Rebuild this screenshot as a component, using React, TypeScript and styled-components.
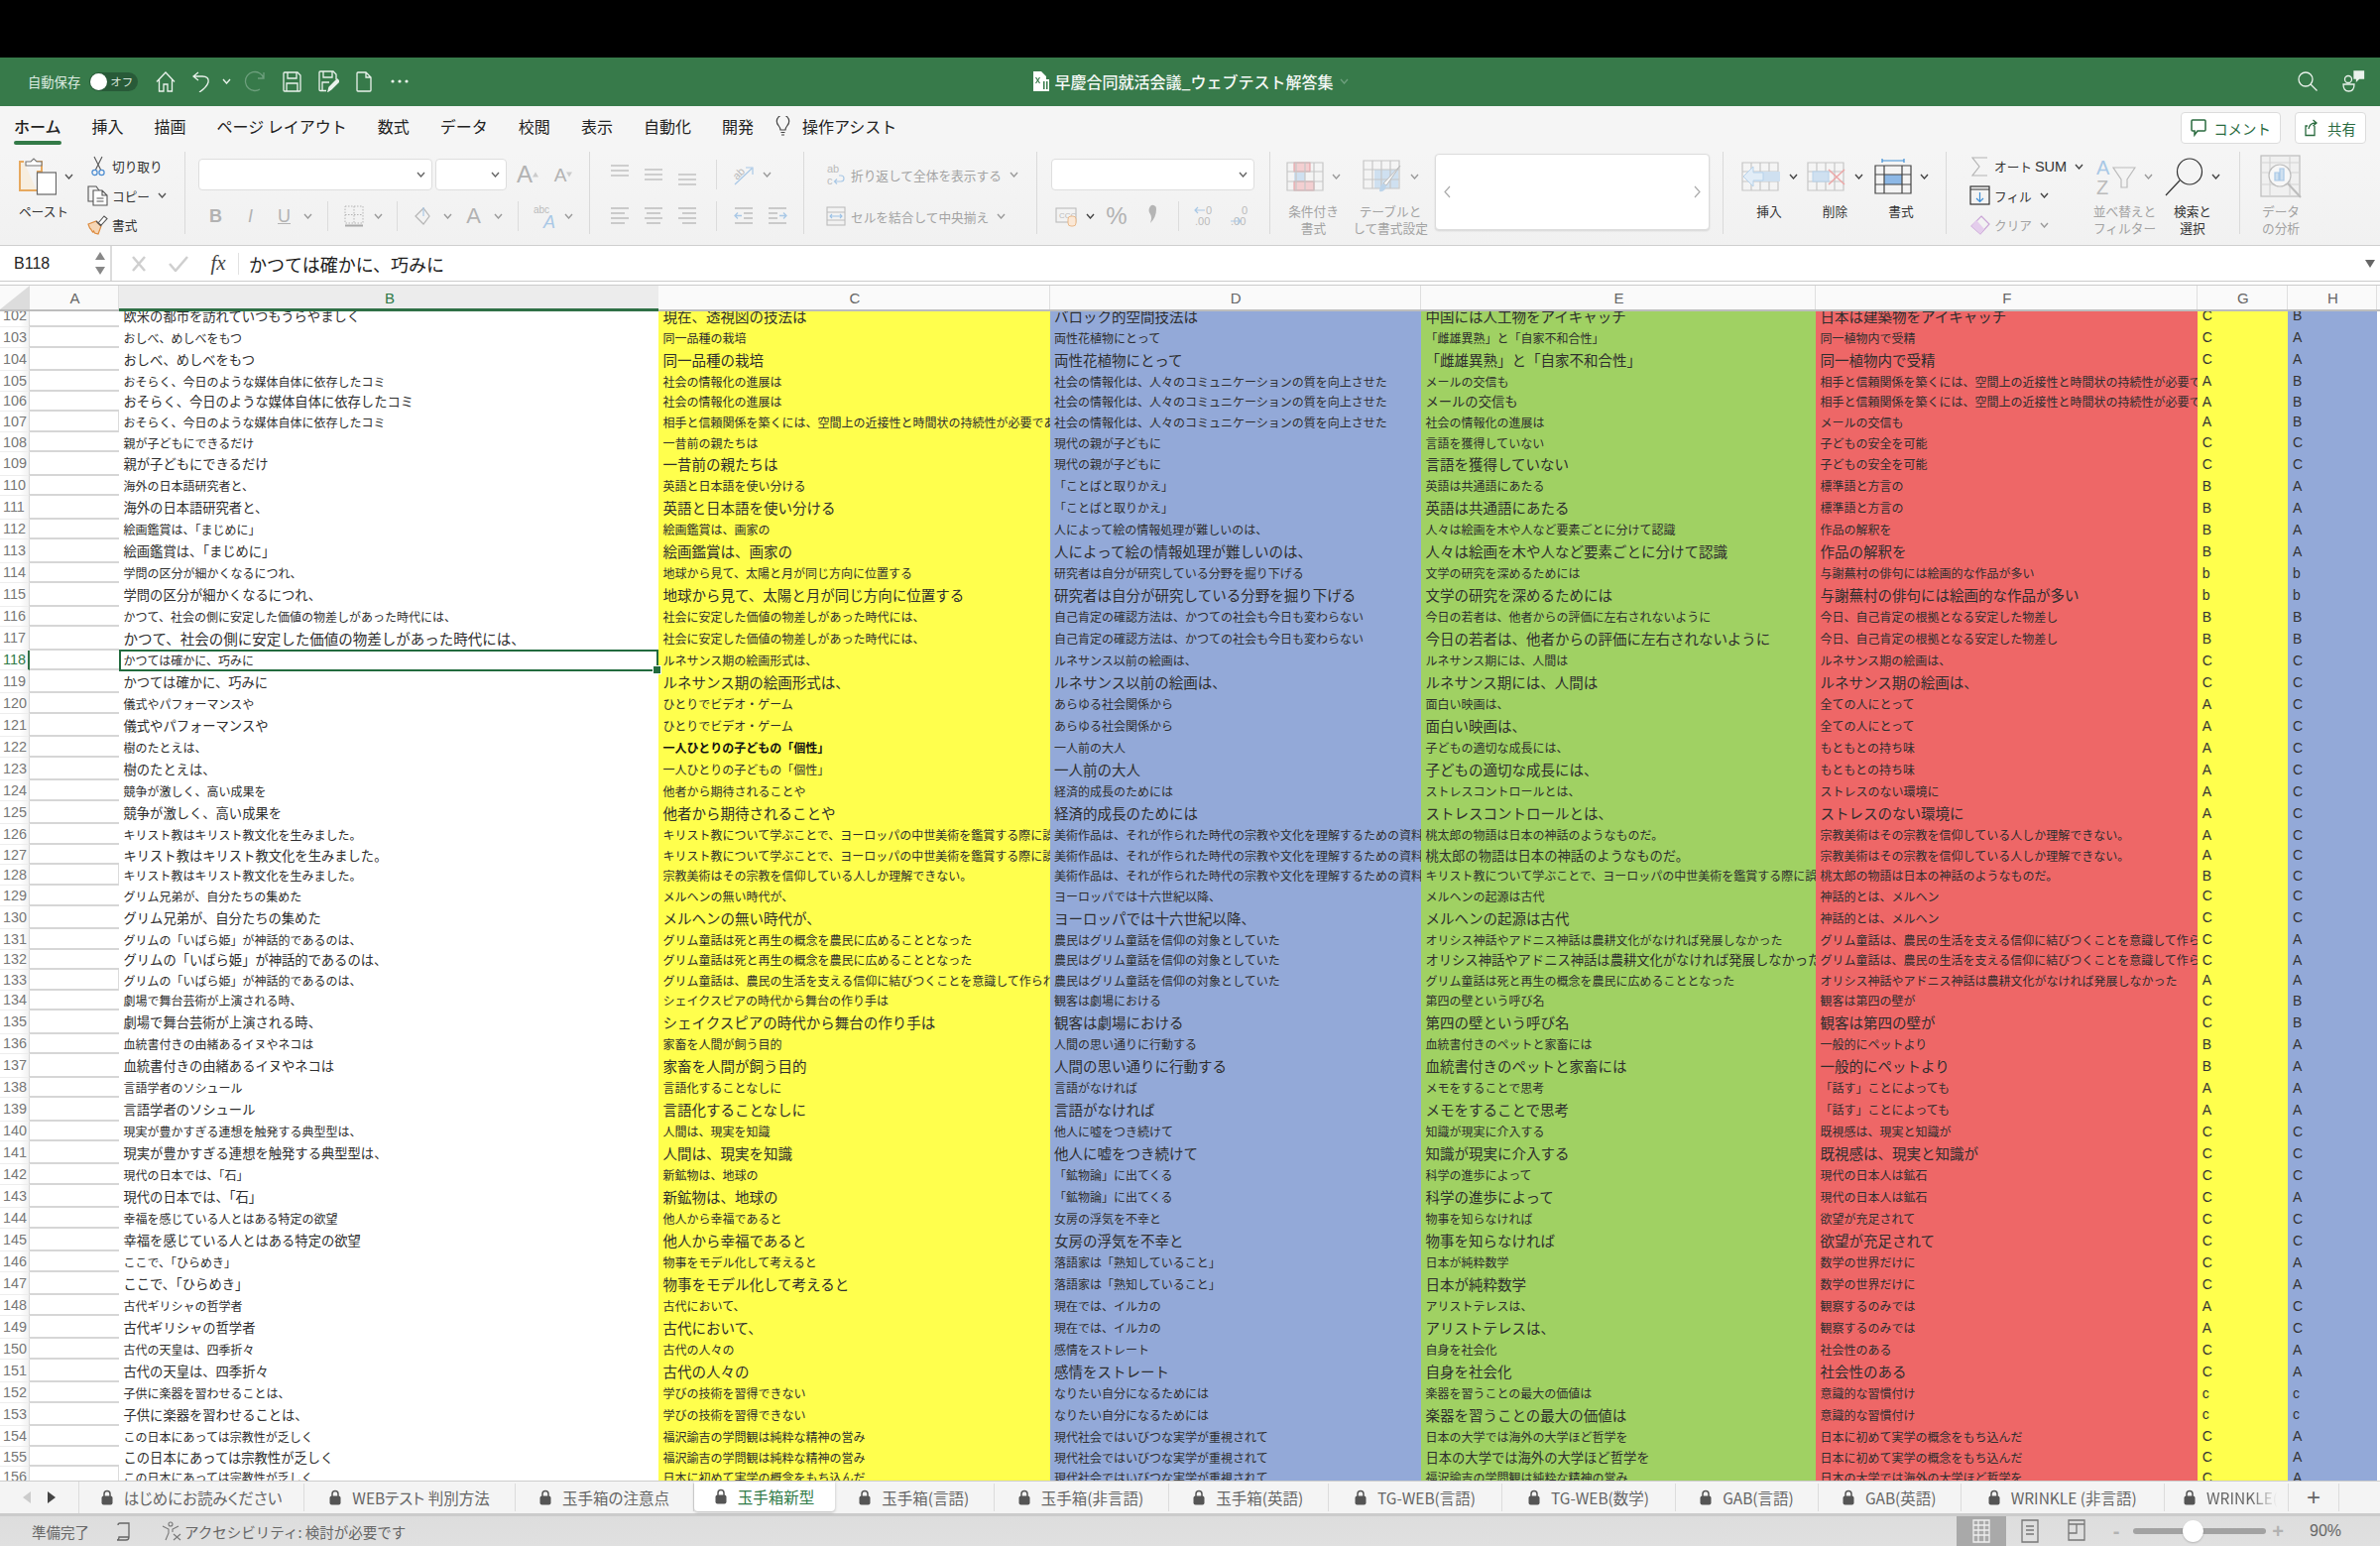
import React from 'react';
import styled, { createGlobalStyle } from 'styled-components';

const JP = `"Noto Sans CJK JP", "Noto Sans", sans-serif`;
const LATIN = `"Liberation Sans", "Noto Sans", sans-serif`;
const COLS = '30px 90px 544px 394.6px 374.4px 398px 384.7px 91.3px 90px 3px';

const GlobalStyle = createGlobalStyle`
  html, body { margin: 0; padding: 0; background: #fff; }
  * { box-sizing: border-box; }
  body { font-family: ${JP}; }
`;

const Page = styled.div`
  width: 2400px;
  height: 1559px;
  display: flex;
  flex-direction: column;
  overflow: hidden;
  background: #fff;
`;

const TopBlack = styled.div`
  height: 57.500px;
  background: #000;
`;

/* title bar */
const TitleBar = styled.div`
  height: 49.500px;
  background: #377a4a;
  display: grid;
  grid-template-columns: 1fr auto 1fr;
  align-items: center;
  color: #fff;
`;

const QuickBar = styled.div`
  display: flex;
  align-items: center;
  gap: 17px;
  padding-left: 28px;
`;

const AutoSave = styled.span`
  font-size: 13.3px;
  color: #dcebe0;
  margin-right: -8px;
`;

const Toggle = styled.div`
  position: relative;
  width: 49px;
  height: 19px;
  border-radius: 10px;
  background: #285a38;
  color: #d5e4d9;
  font-size: 11.5px;
  line-height: 19px;
  padding-left: 21px;
  margin-right: 1px;

  &::before {
    content: '';
    position: absolute;
    left: 1px;
    top: 1px;
    width: 17px;
    height: 17px;
    border-radius: 50%;
    background: #fff;
  }
`;

const UndoGroup = styled.div`
  display: flex;
  align-items: center;
  gap: 12px;
  margin-right: -4px;
`;

const TitleCenter = styled.div`
  display: flex;
  align-items: center;
  gap: 6px;
  font-size: 16px;
  font-weight: 500;
  color: #f4f8f5;
`;

const TitleRight = styled.div`
  display: flex;
  justify-content: flex-end;
  align-items: center;
  gap: 25px;
  padding-right: 15px;
`;

/* ribbon tabs */
const TabsRow = styled.div`
  height: 46px;
  background: #f5f5f5;
  display: flex;
  align-items: flex-start;
  gap: 31px;
  padding-left: 14px;
`;

const RibbonTab = styled.div<{ $active?: boolean }>`
  position: relative;
  height: 39px;
  padding-top: 7px;
  font-size: 16px;
  line-height: 26px;
  color: #222;
  white-space: nowrap;
  font-weight: ${(p) => (p.$active ? 500 : 400)};

  &::after {
    content: '';
    display: ${(p) => (p.$active ? 'block' : 'none')};
    position: absolute;
    left: 0;
    right: 0;
    bottom: 0;
    height: 4px;
    border-radius: 2px;
    background: #337a47;
  }
`;

const AssistTab = styled(RibbonTab)`
  display: flex;
  align-items: center;
  gap: 12px;
  margin-left: -9px;
  height: 39px;
  padding-top: 0;
`;

const TabActions = styled.div`
  margin-left: auto;
  display: flex;
  gap: 14px;
  padding: 6px 14px 0 0;
`;

const ActionButton = styled.div<{ $w: number }>`
  width: ${(p) => p.$w}px;
  height: 32px;
  background: #fff;
  border: 1px solid #dcdcdc;
  border-radius: 4px;
  display: flex;
  align-items: center;
  justify-content: center;
  gap: 7px;
  font-size: 14.400px;
  color: #2a6b3f;
  white-space: nowrap;
`;

/* ribbon body */
const Ribbon = styled.div`
  height: 95px;
  background: linear-gradient(#f5f5f5, #f1f1f1);
  border-bottom: 1px solid #cfcfcf;
  display: flex;
  align-items: flex-start;
`;

const Group = styled.div<{ $w: number; $pl?: number; $gap?: number; $last?: boolean }>`
  width: ${(p) => p.$w}px;
  height: 83px;
  flex-shrink: 0;
  padding-left: ${(p) => p.$pl ?? 0}px;
  display: flex;
  align-items: flex-start;
  gap: ${(p) => p.$gap ?? 0}px;
  border-right: ${(p) => (p.$last ? 'none' : '1px solid #dadada')};
`;

const Stack = styled.div`
  display: flex;
  flex-direction: column;
  gap: 10px;
  padding-top: 7px;
`;

const ToolRow = styled.div`
  display: flex;
  align-items: center;
  height: 32px;
`;

const Slot = styled.span<{ $w: number }>`
  width: ${(p) => p.$w}px;
  flex-shrink: 0;
  display: inline-flex;
  align-items: center;
  justify-content: center;
`;

const Combo = styled.div<{ $w: number }>`
  width: ${(p) => p.$w}px;
  height: 32px;
  background: #fff;
  border: 1px solid #dedede;
  border-radius: 4px;
  margin-right: 3px;
  display: flex;
  align-items: center;
  justify-content: flex-end;
  padding-right: 6px;
`;

const VSep = styled.span`
  width: 1px;
  height: 30px;
  background: #dcdcdc;
`;

const Glyph = styled.span<{ $size: number; $italic?: boolean; $bold?: boolean; $line?: boolean }>`
  font-family: ${LATIN};
  font-size: ${(p) => p.$size}px;
  color: #b2b2b2;
  font-style: ${(p) => (p.$italic ? 'italic' : 'normal')};
  font-weight: ${(p) => (p.$bold ? 700 : 400)};
  text-decoration: ${(p) => (p.$line ? 'underline' : 'none')};
  line-height: 1;
`;

const Label = styled.span<{ $muted?: boolean }>`
  font-size: 12.700px;
  color: ${(p) => (p.$muted ? '#a3a3a3' : '#333')};
  white-space: nowrap;
  margin-right: 8px;
`;

const SumText = styled.span`
  font-family: ${LATIN};
  font-size: 14.500px;
`;

const CmdCol = styled.div<{ $w?: number }>`
  width: ${(p) => (p.$w ? `${p.$w}px` : 'auto')};
  display: flex;
  flex-direction: column;
  padding-top: 0;
`;

const CmdRow = styled.div`
  display: flex;
  align-items: center;
  height: 29.500px;
`;

const BigTool = styled.div<{ $w: number }>`
  width: ${(p) => p.$w}px;
  flex-shrink: 0;
  display: flex;
  flex-direction: column;
  align-items: center;
`;

const BigIcon = styled.div`
  height: 50px;
  width: 100%;
  display: flex;
  align-items: center;
  justify-content: center;
  gap: 8px;
`;

const BigLabel = styled.div<{ $muted?: boolean }>`
  font-size: 12.700px;
  line-height: 17px;
  margin-top: 1px;
  text-align: center;
  white-space: nowrap;
  color: ${(p) => (p.$muted ? '#a3a3a3' : '#333')};
`;

const Gallery = styled.div`
  width: 277px;
  height: 77px;
  margin-top: 2px;
  background: #fff;
  border: 1px solid #dcdcdc;
  border-radius: 4px;
  box-shadow: 0 1px 2px rgba(0, 0, 0, 0.12);
  display: flex;
  align-items: center;
  justify-content: space-between;
  padding: 0 8px;
`;

/* formula bar */
const FormulaBar = styled.div`
  height: 36px;
  background: #fff;
  border-bottom: 1px solid #cbcbcb;
  display: flex;
  align-items: center;
`;

const NameBox = styled.div`
  width: 113px;
  height: 100%;
  border-right: 2px solid #dcdcdc;
  display: flex;
  align-items: center;
  justify-content: space-between;
  padding: 0 5px 0 14px;
  font-family: ${LATIN};
  font-size: 16px;
  color: #222;
`;

const Spinner = styled.div`
  display: flex;
  flex-direction: column;
  gap: 7px;
`;

const Fx = styled.span`
  font-family: 'Liberation Serif', serif;
  font-style: italic;
  font-size: 21px;
  color: #444;
  margin-left: 7px;
`;

const FormulaDivider = styled.span`
  width: 1px;
  height: 22px;
  background: #e2e2e2;
  margin-right: 10px;
`;

const FormulaText = styled.div`
  flex: 1;
  font-size: 18px;
  color: #1c1c1c;
`;

const FormulaDrop = styled.div`
  padding-right: 5px;
  display: flex;
`;

/* sheet */
const HeaderRow = styled.div`
  margin-top: 3px;
  height: 27px;
  display: grid;
  grid-template-columns: ${COLS};
  border-top: 1px solid #cbcbcb;
  border-bottom: 2px solid #bdbdbd;
  background: #fafafa;
`;

const Corner = styled.div`
  position: relative;
  background: #fafafa;

  &::before {
    content: '';
    position: absolute;
    inset: 0;
    background: #dcdcdc;
    clip-path: polygon(100% 0, 100% 100%, 0 100%);
  }
`;

const ColHead = styled.div<{ $active?: boolean }>`
  position: relative;
  display: flex;
  align-items: center;
  justify-content: center;
  padding-left: 2px;
  font-family: ${LATIN};
  font-size: 15px;
  color: ${(p) => (p.$active ? '#2f7a47' : '#666')};
  background: ${(p) => (p.$active ? '#ececec' : 'transparent')};
  border-right: ${(p) => (p.$active ? 'none' : '1px solid #dfdfdf')};

  &::after {
    content: '';
    display: ${(p) => (p.$active ? 'block' : 'none')};
    position: absolute;
    left: 0;
    right: 0;
    bottom: -2px;
    height: 3px;
    background: #2f7046;
  }
`;

const SheetView = styled.div`
  flex: 1;
  min-height: 0;
  overflow: hidden;
`;

const Sheet = styled.div`
  margin-top: -7.300px;
`;

const Row = styled.div<{ $tall: boolean }>`
  display: grid;
  grid-template-columns: ${COLS};
  height: ${(p) => (p.$tall ? 23.4 : 20.57)}px;
`;

const RowHead = styled.div<{ $active?: boolean }>`
  font-family: ${LATIN};
  font-size: 14.400px;
  color: ${(p) => (p.$active ? '#2f7a47' : '#777')};
  padding-left: 3px;
  display: flex;
  align-items: center;
  background: linear-gradient(90deg, #fff 70%, #f1f1f1);
  border-bottom: 1px solid #ededed;
  border-right: ${(p) => (p.$active ? '2px solid #2f7046' : '1px solid #d9d9d9')};
`;

const BlankCell = styled.div<{ $boxed?: boolean }>`
  background: #fff;
  border-bottom: 2px solid #d6d6d6;
  border-right: ${(p) => (p.$boxed ? '1px solid #dcdcdc' : 'none')};
`;

const Cell = styled.div<{ $size: string; $bg: string; $selected?: boolean }>`
  position: relative;
  background: ${(p) => p.$bg};
  display: flex;
  align-items: center;
  padding-left: 4.500px;
  white-space: nowrap;
  overflow: ${(p) => (p.$selected ? 'visible' : 'hidden')};
  font-size: ${(p) => (p.$size === 'l' ? 14.5 : p.$size === 'm' ? 13.3 : 12)}px;
  font-weight: ${(p) => (p.$size === 'b' ? 700 : 400)};
  color: ${(p) => (p.$size === 'b' ? '#111' : '#2e2e2e')};

  ${(p) =>
    p.$selected &&
    `
    z-index: 2;
    &::before {
      content: '';
      position: absolute;
      inset: -1px 0 -1px 0;
      border: 2.5px solid #226b3e;
    }
    &::after {
      content: '';
      position: absolute;
      right: -3px;
      bottom: -4px;
      width: 7px;
      height: 7px;
      background: #226b3e;
      border: 1px solid #fff;
    }
  `}
`;

const LetterCell = styled(Cell)`
  font-family: ${LATIN};
  font-size: 14px;
  padding-left: 5px;
  color: #333;
`;

/* sheet tabs */
const SheetTabs = styled.div`
  height: 36px;
  background: #f4f4f4;
  border-top: 1px solid #cdcdcd;
  border-bottom: 3px solid #cbcbcb;
  display: flex;
  align-items: flex-start;
`;

const TabNav = styled.div`
  width: 80px;
  height: 32px;
  display: flex;
  align-items: center;
  justify-content: space-around;
  padding: 0 15px;
  border-right: 1px solid #dcdcdc;
`;

const SheetTab = styled.div<{ $w: number; $active?: boolean; $fade?: boolean }>`
  width: ${(p) => p.$w}px;
  height: ${(p) => (p.$active ? 30 : 28)}px;
  margin-top: ${(p) => (p.$active ? 0 : 2)}px;
  flex-shrink: 0;
  display: flex;
  align-items: center;
  justify-content: ${(p) => (p.$fade ? 'flex-start' : 'center')};
  gap: 11px;
  padding-left: ${(p) => (p.$fade ? 19 : 0)}px;
  overflow: hidden;
  white-space: nowrap;
  font-size: 15.500px;
  font-feature-settings: 'palt';
  color: ${(p) => (p.$active ? '#2f7a47' : '#666')};
  background: ${(p) => (p.$active ? '#fff' : 'transparent')};
  border-right: ${(p) => (p.$active ? 'none' : '1px solid #dcdcdc')};
  border-radius: ${(p) => (p.$active ? '0 0 4px 4px' : '0')};
  box-shadow: ${(p) => (p.$active ? '0 1px 3px rgba(0,0,0,.25)' : 'none')};

  svg {
    flex-shrink: 0;
  }
`;

const FadeText = styled.span`
  flex-shrink: 0;
  -webkit-mask-image: linear-gradient(90deg, #000 42%, transparent 66%);
  mask-image: linear-gradient(90deg, #000 42%, transparent 66%);
`;

const AddTab = styled.div`
  width: 51px;
  height: 28px;
  margin-top: 2px;
  display: flex;
  align-items: center;
  justify-content: center;
  border-right: 1px solid #dcdcdc;
  font-family: ${LATIN};
  font-size: 24px;
  color: #666;
`;

/* status bar */
const StatusBar = styled.div`
  height: 30px;
  background: linear-gradient(#dddddd, #e0e0e0);
  display: flex;
  align-items: center;
  font-size: 14.500px;
  color: #666;
`;

const StatusLeft = styled.div`
  display: flex;
  align-items: center;
  padding-left: 32px;
`;

const StatusRight = styled.div`
  margin-left: auto;
  height: 100%;
  display: flex;
  align-items: center;
  padding-right: 31px;
`;

const ViewButton = styled.div<{ $w: number; $active?: boolean }>`
  width: ${(p) => p.$w}px;
  height: 100%;
  display: flex;
  align-items: center;
  justify-content: center;
  background: ${(p) => (p.$active ? '#a9a9a9' : 'transparent')};
`;

const ZoomTrack = styled.div`
  position: relative;
  width: 134px;
  height: 6px;
  border-radius: 3px;
  background: #a2a2a2;

  &::after {
    content: '';
    position: absolute;
    left: 50px;
    top: -8px;
    width: 21px;
    height: 22px;
    border-radius: 50%;
    background: #fff;
    box-shadow: 0 1px 2px rgba(0, 0, 0, 0.2);
  }
`;

const ZoomValue = styled.span`
  font-family: ${LATIN};
  font-size: 16px;
  color: #666;
  margin-left: 20px;
  width: 40px;
`;

/* icons */
type C = { c?: string };

const Chev = ({ c = '#9a9a9a' }: C) => (
  <svg width="9" height="6" viewBox="0 0 9 6" fill="none">
    <path d="M1 1l3.500 4L8 1" stroke={c} strokeWidth="1.400" />
  </svg>
);

const W = '#eaf2ec';

const HomeIcon = () => (
  <svg width="20" height="21" viewBox="0 0 20 21" fill="none" stroke={W} strokeWidth="1.300">
    <path d="M1 10.500L10 1l9 9.500M3.500 8v12H8v-7h4v7h4.500V8" />
  </svg>
);
const UndoIcon = () => (
  <svg width="18" height="21" viewBox="0 0 18 21" fill="none" stroke={W} strokeWidth="1.300">
    <path d="M6 1L1 5l5 4M1 5h9q7 0 6 6-1.500 5-9 10" />
  </svg>
);
const RedoIcon = () => (
  <svg width="22" height="22" viewBox="0 0 22 22" fill="none" stroke="#6d9f7d" strokeWidth="1.300">
    <path d="M20 8A9.500 9.500 0 1 0 11 20.500q3 0 5-1.500M20 2v6h-6" />
  </svg>
);
const SaveIcon = () => (
  <svg width="19" height="21" viewBox="0 0 19 21" fill="none" stroke={W} strokeWidth="1.300">
    <path d="M2 1h13l3 3v15a1 1 0 0 1-1 1H2a1 1 0 0 1-1-1V2a1 1 0 0 1 1-1zM5 1v6h9V1M4 20v-8h11v8" />
  </svg>
);
const SaveAsIcon = () => (
  <svg width="21" height="22" viewBox="0 0 21 22" fill="none" stroke={W} strokeWidth="1.300">
    <path d="M8 20.500H2a1 1 0 0 1-1-1V2a1 1 0 0 1 1-1h13l3 3v5M5 1v6h9V1M4 20v-8h7" />
    <path d="M10 21l1-4 8-8 2 2-8 8z" fill={W} />
  </svg>
);
const NewIcon = () => (
  <svg width="16" height="21" viewBox="0 0 16 21" fill="none" stroke={W} strokeWidth="1.300">
    <path d="M1 2a1 1 0 0 1 1-1h8l5 5v13a1 1 0 0 1-1 1H2a1 1 0 0 1-1-1zM10 1v5h5" />
  </svg>
);
const DotsIcon = () => (
  <svg width="18" height="4" viewBox="0 0 18 4" fill={W} style={{ marginLeft: 2 }}>
    <circle cx="2" cy="2" r="1.600" />
    <circle cx="9" cy="2" r="1.600" />
    <circle cx="16" cy="2" r="1.600" />
  </svg>
);
const FileIcon = () => (
  <svg width="17" height="20" viewBox="0 0 17 20">
    <path d="M1 0h8l5 5v3h3v12H1z" fill="#fff" />
    <path d="M3.500 6l4 6M7.500 6l-4 6" stroke="#377a4a" strokeWidth="1.200" />
    <path d="M11 10h1.500v8H11zM14 10h1.500v8H14z" fill="#377a4a" />
  </svg>
);
const SearchIcon = () => (
  <svg width="20" height="20" viewBox="0 0 20 20" fill="none" stroke={W} strokeWidth="1.300">
    <circle cx="8" cy="8" r="7" />
    <path d="M13 13l6.500 6.500" />
  </svg>
);
const PeopleIcon = () => (
  <svg width="23" height="22" viewBox="0 0 23 22" fill="none" stroke={W} strokeWidth="1.300">
    <circle cx="6" cy="9" r="3.500" />
    <path d="M1 14h11q0 7-5.500 7T1 14z" />
    <path d="M12 1h9.500v7H17l-2.500 2.500V8H12z" fill={W} />
  </svg>
);
const BulbIcon = () => (
  <svg width="15" height="20" viewBox="0 0 15 20" fill="none" stroke="#444" strokeWidth="1.200">
    <path d="M5 14q0-2-2-4.500A6.200 6.200 0 1 1 12 9.500Q10 12 10 14zM5.500 16.500h4M6 19h3" />
  </svg>
);
const CommentIcon = () => (
  <svg width="16" height="18" viewBox="0 0 16 18" fill="none" stroke="#2a6b3f" strokeWidth="1.500">
    <path d="M2 1h12a1 1 0 0 1 1 1v9a1 1 0 0 1-1 1H7l-3 4v-4H2a1 1 0 0 1-1-1V2a1 1 0 0 1 1-1z" />
  </svg>
);
const ShareIcon = () => (
  <svg width="16" height="18" viewBox="0 0 16 18" fill="none" stroke="#2a6b3f" strokeWidth="1.300">
    <path d="M10 7v9.500H1V7h2M4 10q1-6 7-6M8.500 1L12 4 8.500 7" />
  </svg>
);

const PasteIcon = () => (
  <svg width="42" height="38" viewBox="-4 0 42 38" fill="none">
    <path d="M5 4H1v29h17" stroke="#e7a95f" strokeWidth="2" fill="#f7eedf" />
    <path d="M18 4h5v10H18" stroke="#e7a95f" strokeWidth="2" />
    <path d="M7 8V4h5l3-3 3 3h5v4z" stroke="#777" strokeWidth="1.100" fill="#fff" />
    <rect x="18.500" y="15" width="19" height="22" fill="#fff" stroke="#666" strokeWidth="1.200" />
  </svg>
);
const ScissorIcon = () => (
  <svg width="14" height="21" viewBox="0 0 14 21" fill="none">
    <path d="M3 1l6.500 13M11 1L4.500 14" stroke="#555" strokeWidth="1.100" />
    <circle cx="3.500" cy="17" r="2.600" stroke="#4a8bd0" strokeWidth="1.200" />
    <circle cx="10.500" cy="17" r="2.600" stroke="#4a8bd0" strokeWidth="1.200" />
  </svg>
);
const CopyIcon = () => (
  <svg width="21" height="21" viewBox="0 0 21 21" fill="none" stroke="#555" strokeWidth="1.100">
    <path d="M6 16H1V1h8l3 4" />
    <path d="M6 5h9l5 5v10H6zM15 5v5h5M9.500 13h7M9.500 16h7" fill="#fff" />
  </svg>
);
const PainterIcon = () => (
  <svg width="21" height="20" viewBox="0 0 21 20" fill="none">
    <path d="M1 9l8-3 5 5-3 8-3.500-1-1-2-1 1-2-3-1-1z" fill="#f6d6b5" stroke="#dd8b3f" strokeWidth="1.200" />
    <path d="M11 8l6-7 3 2.500L14 10z" fill="#fff" stroke="#555" strokeWidth="1.100" />
    <path d="M9 6l5 5" stroke="#555" strokeWidth="1.100" />
  </svg>
);

const BorderIcon = () => (
  <svg width="20" height="22" viewBox="0 0 20 22" fill="none" stroke="#b5b5b5">
    <path d="M1 1h18v17H1zM10 1v17M1 9.500h18" strokeDasharray="1.500 1.500" />
    <path d="M1 20.500h18" strokeWidth="2" stroke="#aaa" />
  </svg>
);
const FillIcon = () => (
  <svg width="18" height="22" viewBox="0 0 18 22" fill="none" stroke="#b5b5b5" strokeWidth="1.200">
    <path d="M1 11L9 3l6 8-6 8z" />
    <path d="M9 2v9" stroke="#a9c8e6" />
  </svg>
);
const AbcIcon = () => (
  <svg width="24" height="26" viewBox="0 0 24 26">
    <text x="0" y="10" fontFamily="Liberation Sans" fontSize="10" fill="#bbb">abc</text>
    <text x="10" y="25" fontFamily="Liberation Sans" fontStyle="italic" fontSize="18" fill="#a9c8e6">A</text>
  </svg>
);
const CommaIcon = () => (
  <svg width="12" height="26" viewBox="0 0 12 26">
    <path d="M4 3a3.500 3.500 0 0 1 6 3q0 8-6 14 2-6 0-9-3-4 0-8z" fill="#b5b5b5" />
  </svg>
);
const Caret = ({ flip }: { flip?: boolean }) => (
  <svg width="7" height="13" viewBox="0 0 7 13" fill="none" stroke="#aaa" strokeWidth="1.200">
    <path d={flip ? 'M1 1l5 5.500L1 12' : 'M6 1L1 6.500 6 12'} />
  </svg>
);

const Lines = ({ y, w = [18, 18, 18] }: { y: number[]; w?: number[] }) => (
  <svg width="20" height="26" viewBox="0 0 20 26" fill="none" stroke="#bdbdbd" strokeWidth="1.400">
    {y.map((v, i) => (
      <path key={i} d={`M${(20 - w[i]) / 2} ${v}h${w[i]}`} />
    ))}
  </svg>
);
const AlignH = ({ side }: { side: 'l' | 'c' | 'r' }) => {
  const x = (w: number) => (side === 'l' ? 1 : side === 'r' ? 19 - w : (20 - w) / 2);
  return (
    <svg width="20" height="20" viewBox="0 0 20 20" fill="none" stroke="#bdbdbd" strokeWidth="1.400">
      <path d={`M${x(18)} 2h18M${x(14)} 7h14M${x(18)} 12h18M${x(14)} 17h14`} />
    </svg>
  );
};
const OrientIcon = () => (
  <svg width="22" height="22" viewBox="0 0 22 22" fill="none">
    <text x="1" y="13" transform="rotate(-45 8 10)" fontFamily="Liberation Sans" fontSize="11" fill="#bbb">ab</text>
    <path d="M3 21L20 5M14 4h7v7" stroke="#a9c8e6" strokeWidth="1.200" />
  </svg>
);
const OutdentIcon = ({ flip }: { flip?: boolean }) => (
  <svg width="20" height="20" viewBox="0 0 20 20" fill="none" style={flip ? { transform: 'scaleX(-1)' } : undefined}>
    <path d="M1 2h18M10 7h9M10 12h9M1 17h18" stroke="#bdbdbd" strokeWidth="1.300" />
    <path d="M8 9.500H1M4 6.500l-3 3 3 3" stroke="#a9c8e6" strokeWidth="1.300" />
  </svg>
);
const WrapIcon = () => (
  <svg width="20" height="24" viewBox="0 0 20 24">
    <text x="1" y="10" fontFamily="Liberation Sans" fontSize="11" fill="#bbb">ab</text>
    <text x="1" y="22" fontFamily="Liberation Sans" fontSize="11" fill="#bbb">c</text>
    <path d="M9 19h6q3 0 3-3t-3-3h-2M11 16.500L8.500 19l2.500 2.500" stroke="#a9c8e6" strokeWidth="1.200" fill="none" />
  </svg>
);
const MergeIcon = () => (
  <svg width="20" height="20" viewBox="0 0 20 20" fill="none" stroke="#bcbcbc" strokeWidth="1.100">
    <rect x="1" y="1" width="18" height="18" />
    <path d="M1 6h18M1 14h18" />
    <path d="M4 10h12M6 8l-2 2 2 2M14 8l2 2-2 2" stroke="#9cc2e6" />
  </svg>
);
const CurrencyIcon = () => (
  <svg width="23" height="22" viewBox="0 0 23 22" fill="none">
    <rect x="1" y="3" width="20" height="14" stroke="#bcbcbc" strokeWidth="1.100" />
    <text x="4" y="13" fontFamily="Liberation Sans" fontSize="8" fill="#bbb">CCC</text>
    <rect x="13" y="11" width="8" height="10" rx="3" fill="#fbe8d6" stroke="#e9b98a" />
  </svg>
);
const DecimalIcon = ({ inc }: { inc?: boolean }) => (
  <svg width="22" height="22" viewBox="0 0 22 22" fill="none">
    <text x={inc ? 13 : 2} y={inc ? 9 : 20} fontFamily="Liberation Sans" fontSize="11" fill="#bbb">{inc ? '0' : '.00'}</text>
    <text x={inc ? 2 : 13} y={inc ? 20 : 9} fontFamily="Liberation Sans" fontSize="11" fill="#bbb">{inc ? '.00' : '0'}</text>
    <path d={inc ? 'M12 5H2M5 2L2 5l3 3' : 'M2 16h10M9 13l3 3-3 3'} stroke="#a9c8e6" strokeWidth="1.200" />
  </svg>
);

const GridBase = ({ s = '#c6c6c6' }: { s?: string }) => (
  <path d="M1 1h36v28H1zM1 10h36M1 20h36M10 1v28M19 1v28M28 1v28" stroke={s} strokeWidth="1.200" fill="none" />
);
const CondIcon = () => (
  <svg width="38" height="30" viewBox="0 0 38 30">
    <rect x="8" y="1" width="16" height="9" fill="#f3cfd1" stroke="#e29a9e" />
    <rect x="8" y="11" width="11" height="9" fill="#cfe0f0" />
    <rect x="8" y="20" width="20" height="9" fill="#f3cfd1" stroke="#e29a9e" />
    <GridBase />
  </svg>
);
const TableIcon = () => (
  <svg width="40" height="34" viewBox="0 0 40 34">
    <rect x="12" y="10" width="24" height="19" fill="#cfe0f0" />
    <GridBase />
    <path d="M38 6L24 26l-3-2z" fill="#f7f7f7" stroke="#bbb" />
    <path d="M21 24q-4 2-4 8 6 1 7-6z" fill="#bcd4ea" />
  </svg>
);
const InsertIcon = () => (
  <svg width="40" height="30" viewBox="0 0 40 30">
    <GridBase />
    <rect x="14" y="10" width="25" height="10" fill="#cfe0f0" />
    <path d="M12 5L2 15l10 10v-6h10v-8H12z" fill="#e2edf7" stroke="#b7d2ea" />
  </svg>
);
const DeleteIcon = () => (
  <svg width="40" height="30" viewBox="0 0 40 30">
    <GridBase />
    <rect x="6" y="10" width="16" height="10" fill="#cfe0f0" stroke="#b7d2ea" />
    <path d="M22 8l16 15M38 8L22 23" stroke="#eda7a7" strokeWidth="1.500" fill="none" />
  </svg>
);
const FormatIcon = () => (
  <svg width="38" height="36" viewBox="0 0 38 36">
    <path d="M8 2h22M8 0v4M30 0v4" stroke="#3f8fd6" strokeWidth="1.200" fill="none" />
    <rect x="10" y="16" width="18" height="10" fill="#8db8e6" />
    <path d="M1 7h36v28H1zM1 16h36M1 26h36M10 7v28M28 7v28" stroke="#444" strokeWidth="1.200" fill="none" />
  </svg>
);
const SigmaIcon = () => (
  <svg width="17" height="20" viewBox="0 0 17 20" fill="none" stroke="#b4b4b4" strokeWidth="1.200">
    <path d="M16 1H1l7 9-7 9h15" />
  </svg>
);
const FillDownIcon = () => (
  <svg width="21" height="20" viewBox="0 0 21 20" fill="none">
    <rect x="1" y="1" width="19" height="18" stroke="#333" strokeWidth="1.200" />
    <path d="M1 4h19" stroke="#333" />
    <path d="M10.500 7v9M7 13l3.500 3.500L14 13" stroke="#3f8fd6" strokeWidth="1.200" />
  </svg>
);
const EraserIcon = () => (
  <svg width="21" height="20" viewBox="0 0 21 20" fill="none">
    <path d="M12 1l8 8-9 10-9-8z" stroke="#c9a5d6" strokeWidth="1.200" />
    <path d="M2 11l5-6 8 9-4 5z" fill="#e4cdec" />
  </svg>
);
const SortIcon = () => (
  <svg width="40" height="36" viewBox="0 0 40 36">
    <text x="0" y="16" fontFamily="Liberation Sans" fontSize="20" fill="#a9c8e6">A</text>
    <text x="0" y="36" fontFamily="Liberation Sans" fontSize="20" fill="#bbb">Z</text>
    <path d="M17 9h22l-8 12v8l-6 0V21z" fill="none" stroke="#bbb" strokeWidth="1.200" />
  </svg>
);
const FindIcon = () => (
  <svg width="39" height="39" viewBox="0 0 39 39" fill="none" stroke="#333" strokeWidth="1.200">
    <ellipse cx="25" cy="14" rx="12.500" ry="13" />
    <path d="M15 23L1 38" />
  </svg>
);
const AnalysisIcon = () => (
  <svg width="43" height="44" viewBox="0 0 43 44" fill="none" stroke="#bcbcbc" strokeWidth="1.200">
    <rect x="1" y="1" width="39" height="41" fill="#f0f0f0" />
    <path d="M1 8h39M1 18h39M1 30h39M10 1v41M30 1v41" stroke="#d4d4d4" />
    <circle cx="20" cy="21" r="11" fill="#f7f7f7" />
    <path d="M28 29l13 14" strokeWidth="2" />
    <path d="M15 18h4v8h-4zM20 14h4v12h-4z" fill="#cfe0f0" stroke="#a9c8e6" />
  </svg>
);
const CrossIcon = () => (
  <svg width="16" height="16" viewBox="0 0 16 16" stroke="#cfcfcf" strokeWidth="2.500">
    <path d="M2 1l12 14M14 1L2 15" />
  </svg>
);
const CheckIcon = () => (
  <svg width="20" height="16" viewBox="0 0 20 16" fill="none" stroke="#cfcfcf" strokeWidth="2.500">
    <path d="M1 8l6 7L19 1" />
  </svg>
);
const Tri = ({ d, c = '#888', s = 10 }: { d: 'u' | 'd' | 'l' | 'r'; c?: string; s?: number }) => {
  const shape = { u: '0,8 5,0 10,8', d: '0,0 10,0 5,8', l: '8,0 8,12 0,6', r: '0,0 0,12 8,6' }[d];
  const v = d === 'l' || d === 'r';
  return (
    <svg width={v ? 8 : s} height={v ? 12 : 8} viewBox={v ? '0 0 8 12' : '0 0 10 8'}>
      <polygon points={shape} fill={c} />
    </svg>
  );
};
const LockIcon = () => (
  <svg width="12" height="16" viewBox="0 0 12 16">
    <path d="M3 7V4.500a3 3 0 0 1 6 0V7" fill="none" stroke="#555" strokeWidth="1.500" />
    <rect x="0.500" y="6.500" width="11" height="9" rx="2" fill="#555" />
  </svg>
);
const MacroIcon = () => (
  <svg width="19" height="20" viewBox="0 0 19 20" fill="none" stroke="#666" strokeWidth="1.300">
    <path d="M5 2h9v14M5 2q-2 0-2 2M14 16q0 3-3 3H2q2 0 2-3z" />
  </svg>
);
const A11yIcon = () => (
  <svg width="21" height="20" viewBox="0 0 21 20" fill="none" stroke="#777" strokeWidth="1.100">
    <circle cx="9" cy="3" r="2" />
    <path d="M1 5l6 3v4l-3 7M17 5l-6 3v3M12 13l7 6M19 13l-7 6" />
  </svg>
);
const ViewIcon = ({ kind, c = '#777' }: { kind: 'grid' | 'page' | 'break'; c?: string }) => (
  <svg width="18" height="24" viewBox="0 0 18 24" fill="none" stroke={c} strokeWidth="1.300">
    {kind === 'grid' && <path d="M1 1h16v22H1zM1 6h16M1 11h16M1 16h16M6 1v22M12 1v22" stroke="#eee" />}
    {kind === 'page' && <path d="M1 1h16v22H1zM5 7h8M5 11h8M5 15h8" />}
    {kind === 'break' && <path d="M1 1h16v20H1zM1 5h16M9 5v9H1" />}
  </svg>
);

/* data */
const LONG1 = '相手と信頼関係を築くには、空間上の近接性と時間状の持続性が必要であ';
const INFO = '社会の情報化は、人々のコミュニケーションの質を向上させた';
const MEDIA = 'おそらく、今日のような媒体自体に依存したコミ';
const CHR1 = 'キリスト教について学ぶことで、ヨーロッパの中世美術を鑑賞する際に誤';
const ART = '美術作品は、それが作られた時代の宗教や文化を理解するための資料';
const MOMO = '桃太郎の物語は日本の神話のようなものだ。';
const REL = '宗教美術はその宗教を信仰している人しか理解できない。';
const CHR2 = 'キリスト教はキリスト教文化を生みました。';
const GRIM = 'グリムの「いばら姫」が神話的であるのは、';
const G1 = 'グリム童話は死と再生の概念を農民に広めることとなった';
const G2 = 'グリム童話は、農民の生活を支える信仰に結びつくことを意識して作られ';
const G3 = 'オリシス神話やアドニス神話は農耕文化がなければ発展しなかった';
const G4 = '農民はグリム童話を信仰の対象としていた';

type RowData = [number, string, string, string, string, string, string, string, string];

// no, B, C, D, E, F, G, H, font sizes of B to F
const rows: RowData[] = [
  [102, '欧米の都市を訪れていつもうらやましく', '現在、透視図の技法は', 'バロック的空間技法は', '中国には人工物をアイキャッチ', '日本は建築物をアイキャッチ', 'C', 'B', 'mllll'],
  [103, 'おしべ、めしべをもつ', '同一品種の栽培', '両性花植物にとって', '「雌雄異熟」と「自家不和合性」', '同一植物内で受精', 'C', 'A', 'sssss'],
  [104, 'おしべ、めしべをもつ', '同一品種の栽培', '両性花植物にとって', '「雌雄異熟」と「自家不和合性」', '同一植物内で受精', 'C', 'A', 'mllll'],
  [105, MEDIA, '社会の情報化の進展は', INFO, 'メールの交信も', LONG1, 'A', 'B', 'sssss'],
  [106, MEDIA, '社会の情報化の進展は', INFO, 'メールの交信も', LONG1, 'A', 'B', 'mssms'],
  [107, MEDIA, LONG1, INFO, '社会の情報化の進展は', 'メールの交信も', 'A', 'B', 'sssss'],
  [108, '親が子どもにできるだけ', '一昔前の親たちは', '現代の親が子どもに', '言語を獲得していない', '子どもの安全を可能', 'C', 'C', 'sssss'],
  [109, '親が子どもにできるだけ', '一昔前の親たちは', '現代の親が子どもに', '言語を獲得していない', '子どもの安全を可能', 'C', 'C', 'mlsls'],
  [110, '海外の日本語研究者と、', '英語と日本語を使い分ける', '「ことばと取りかえ」', '英語は共通語にあたる', '標準語と方言の', 'B', 'A', 'sssss'],
  [111, '海外の日本語研究者と、', '英語と日本語を使い分ける', '「ことばと取りかえ」', '英語は共通語にあたる', '標準語と方言の', 'B', 'A', 'mlsls'],
  [112, '絵画鑑賞は、「まじめに」', '絵画鑑賞は、画家の', '人によって絵の情報処理が難しいのは、', '人々は絵画を木や人など要素ごとに分けて認識', '作品の解釈を', 'B', 'A', 'sssss'],
  [113, '絵画鑑賞は、「まじめに」', '絵画鑑賞は、画家の', '人によって絵の情報処理が難しいのは、', '人々は絵画を木や人など要素ごとに分けて認識', '作品の解釈を', 'B', 'A', 'mllll'],
  [114, '学問の区分が細かくなるにつれ、', '地球から見て、太陽と月が同じ方向に位置する', '研究者は自分が研究している分野を掘り下げる', '文学の研究を深めるためには', '与謝蕪村の俳句には絵画的な作品が多い', 'b', 'b', 'sssss'],
  [115, '学問の区分が細かくなるにつれ、', '地球から見て、太陽と月が同じ方向に位置する', '研究者は自分が研究している分野を掘り下げる', '文学の研究を深めるためには', '与謝蕪村の俳句には絵画的な作品が多い', 'b', 'b', 'mllll'],
  [116, 'かつて、社会の側に安定した価値の物差しがあった時代には、', '社会に安定した価値の物差しがあった時代には、', '自己肯定の確認方法は、かつての社会も今日も変わらない', '今日の若者は、他者からの評価に左右されないように', '今日、自己肯定の根拠となる安定した物差し', 'B', 'B', 'sssss'],
  [117, 'かつて、社会の側に安定した価値の物差しがあった時代には、', '社会に安定した価値の物差しがあった時代には、', '自己肯定の確認方法は、かつての社会も今日も変わらない', '今日の若者は、他者からの評価に左右されないように', '今日、自己肯定の根拠となる安定した物差し', 'B', 'B', 'lssls'],
  [118, 'かつては確かに、巧みに', 'ルネサンス期の絵画形式は、', 'ルネサンス以前の絵画は、', 'ルネサンス期には、人間は', 'ルネサンス期の絵画は、', 'C', 'C', 'sssss'],
  [119, 'かつては確かに、巧みに', 'ルネサンス期の絵画形式は、', 'ルネサンス以前の絵画は、', 'ルネサンス期には、人間は', 'ルネサンス期の絵画は、', 'C', 'C', 'mllll'],
  [120, '儀式やパフォーマンスや', 'ひとりでビデオ・ゲーム', 'あらゆる社会関係から', '面白い映画は、', '全ての人にとって', 'A', 'C', 'sssss'],
  [121, '儀式やパフォーマンスや', 'ひとりでビデオ・ゲーム', 'あらゆる社会関係から', '面白い映画は、', '全ての人にとって', 'A', 'C', 'mssls'],
  [122, '樹のたとえは、', '一人ひとりの子どもの「個性」', '一人前の大人', '子どもの適切な成長には、', 'もともとの持ち味', 'A', 'C', 'sbsss'],
  [123, '樹のたとえは、', '一人ひとりの子どもの「個性」', '一人前の大人', '子どもの適切な成長には、', 'もともとの持ち味', 'A', 'C', 'mslls'],
  [124, '競争が激しく、高い成果を', '他者から期待されることや', '経済的成長のためには', 'ストレスコントロールとは、', 'ストレスのない環境に', 'A', 'C', 'sssss'],
  [125, '競争が激しく、高い成果を', '他者から期待されることや', '経済的成長のためには', 'ストレスコントロールとは、', 'ストレスのない環境に', 'A', 'C', 'mllll'],
  [126, CHR2, CHR1, ART, MOMO, REL, 'A', 'C', 'sssss'],
  [127, CHR2, CHR1, ART, MOMO, REL, 'A', 'C', 'mssms'],
  [128, CHR2, REL, ART, CHR1, MOMO, 'B', 'C', 'sssss'],
  [129, 'グリム兄弟が、自分たちの集めた', 'メルヘンの無い時代が、', 'ヨーロッパでは十六世紀以降、', 'メルヘンの起源は古代', '神話的とは、メルヘン', 'C', 'C', 'sssss'],
  [130, 'グリム兄弟が、自分たちの集めた', 'メルヘンの無い時代が、', 'ヨーロッパでは十六世紀以降、', 'メルヘンの起源は古代', '神話的とは、メルヘン', 'C', 'C', 'mllls'],
  [131, GRIM, G1, G4, G3, G2, 'C', 'A', 'sssss'],
  [132, GRIM, G1, G4, G3, G2, 'C', 'A', 'mssms'],
  [133, GRIM, G2, G4, G1, G3, 'A', 'A', 'sssss'],
  [134, '劇場で舞台芸術が上演される時、', 'シェイクスピアの時代から舞台の作り手は', '観客は劇場における', '第四の壁という呼び名', '観客は第四の壁が', 'C', 'B', 'sssss'],
  [135, '劇場で舞台芸術が上演される時、', 'シェイクスピアの時代から舞台の作り手は', '観客は劇場における', '第四の壁という呼び名', '観客は第四の壁が', 'C', 'B', 'mllll'],
  [136, '血統書付きの由緒あるイヌやネコは', '家畜を人間が飼う目的', '人間の思い通りに行動する', '血統書付きのペットと家畜には', '一般的にペットより', 'B', 'A', 'sssss'],
  [137, '血統書付きの由緒あるイヌやネコは', '家畜を人間が飼う目的', '人間の思い通りに行動する', '血統書付きのペットと家畜には', '一般的にペットより', 'B', 'A', 'mllll'],
  [138, '言語学者のソシュール', '言語化することなしに', '言語がなければ', 'メモをすることで思考', '「話す」ことによっても', 'A', 'A', 'sssss'],
  [139, '言語学者のソシュール', '言語化することなしに', '言語がなければ', 'メモをすることで思考', '「話す」ことによっても', 'A', 'A', 'mllls'],
  [140, '現実が豊かすぎる連想を触発する典型型は、', '人間は、現実を知識', '他人に嘘をつき続けて', '知識が現実に介入する', '既視感は、現実と知識が', 'C', 'C', 'sssss'],
  [141, '現実が豊かすぎる連想を触発する典型型は、', '人間は、現実を知識', '他人に嘘をつき続けて', '知識が現実に介入する', '既視感は、現実と知識が', 'C', 'C', 'mllll'],
  [142, '現代の日本では、「石」', '新鉱物は、地球の', '「鉱物論」に出てくる', '科学の進歩によって', '現代の日本人は鉱石', 'C', 'C', 'sssss'],
  [143, '現代の日本では、「石」', '新鉱物は、地球の', '「鉱物論」に出てくる', '科学の進歩によって', '現代の日本人は鉱石', 'C', 'A', 'mlsls'],
  [144, '幸福を感じている人とはある特定の欲望', '他人から幸福であると', '女房の浮気を不幸と', '物事を知らなければ', '欲望が充足されて', 'C', 'C', 'sssss'],
  [145, '幸福を感じている人とはある特定の欲望', '他人から幸福であると', '女房の浮気を不幸と', '物事を知らなければ', '欲望が充足されて', 'C', 'C', 'mllll'],
  [146, 'ここで、「ひらめき」', '物事をモデル化して考えると', '落語家は「熟知していること」', '日本が純粋数学', '数学の世界だけに', 'C', 'A', 'sssss'],
  [147, 'ここで、「ひらめき」', '物事をモデル化して考えると', '落語家は「熟知していること」', '日本が純粋数学', '数学の世界だけに', 'C', 'A', 'mlsls'],
  [148, '古代ギリシャの哲学者', '古代において、', '現在では、イルカの', 'アリストテレスは、', '観察するのみでは', 'A', 'C', 'sssss'],
  [149, '古代ギリシャの哲学者', '古代において、', '現在では、イルカの', 'アリストテレスは、', '観察するのみでは', 'A', 'C', 'mlsls'],
  [150, '古代の天皇は、四季折々', '古代の人々の', '感情をストレート', '自身を社会化', '社会性のある', 'C', 'A', 'sssss'],
  [151, '古代の天皇は、四季折々', '古代の人々の', '感情をストレート', '自身を社会化', '社会性のある', 'C', 'A', 'mllll'],
  [152, '子供に楽器を習わせることは、', '学びの技術を習得できない', 'なりたい自分になるためには', '楽器を習うことの最大の価値は', '意識的な習慣付け', 'c', 'c', 'sssss'],
  [153, '子供に楽器を習わせることは、', '学びの技術を習得できない', 'なりたい自分になるためには', '楽器を習うことの最大の価値は', '意識的な習慣付け', 'c', 'c', 'mssls'],
  [154, 'この日本にあっては宗教性が乏しく', '福沢諭吉の学問観は純粋な精神の営み', '現代社会ではいびつな実学が重視されて', '日本の大学では海外の大学ほど哲学を', '日本に初めて実学の概念をもち込んだ', 'C', 'A', 'sssss'],
  [155, 'この日本にあっては宗教性が乏しく', '福沢諭吉の学問観は純粋な精神の営み', '現代社会ではいびつな実学が重視されて', '日本の大学では海外の大学ほど哲学を', '日本に初めて実学の概念をもち込んだ', 'C', 'A', 'mssms'],
  [156, 'この日本にあっては宗教性が乏しく', '日本に初めて実学の概念をもち込んだ', '現代社会ではいびつな実学が重視されて', '福沢諭吉の学問観は純粋な精神の営み', '日本の大学では海外の大学ほど哲学を', 'C', 'A', 'sssss'],
];

const YELLOW = '#ffff4d';
const BLUE = '#93a9d8';
const GREEN = '#a0d163';
const RED = '#ee6767';
const bgs = ['#fff', YELLOW, BLUE, GREEN, RED];
const BOXED = [107, 128, 133, 156];

const sheetTabs = [
  { name: 'はじめにお読みください', w: 227 },
  { name: 'WEBテスト 判別方法', w: 213 },
  { name: '玉手箱の注意点', w: 180 },
  { name: '玉手箱新型', w: 142, active: true },
  { name: '玉手箱(言語)', w: 160.5 },
  { name: '玉手箱(非言語)', w: 176 },
  { name: '玉手箱(英語)', w: 161.5 },
  { name: 'TG-WEB(言語)', w: 175 },
  { name: 'TG-WEB(数学)', w: 175 },
  { name: 'GAB(言語)', w: 144 },
  { name: 'GAB(英語)', w: 143.5 },
  { name: 'WRINKLE (非言語)', w: 205.5 },
];

const ribbonTabs = ['挿入', '描画', 'ページ レイアウト', '数式', 'データ', '校閲', '表示', '自動化', '開発'];

export default function App() {
  return (
    <Page>
      <GlobalStyle />
      <TopBlack />

      <TitleBar>
        <QuickBar>
          <AutoSave>自動保存</AutoSave>
          <Toggle>オフ</Toggle>
          <HomeIcon />
          <UndoGroup>
            <UndoIcon />
            <Chev c={W} />
          </UndoGroup>
          <RedoIcon />
          <SaveIcon />
          <SaveAsIcon />
          <NewIcon />
          <DotsIcon />
        </QuickBar>
        <TitleCenter>
          <FileIcon />
          早慶合同就活会議_ウェブテスト解答集
          <Chev c="#6d9f7d" />
        </TitleCenter>
        <TitleRight>
          <SearchIcon />
          <PeopleIcon />
        </TitleRight>
      </TitleBar>

      <TabsRow>
        <RibbonTab $active>ホーム</RibbonTab>
        {ribbonTabs.map((t) => (
          <RibbonTab key={t}>{t}</RibbonTab>
        ))}
        <AssistTab>
          <BulbIcon />
          操作アシスト
        </AssistTab>
        <TabActions>
          <ActionButton $w={101}>
            <CommentIcon />
            コメント
          </ActionButton>
          <ActionButton $w={72}>
            <ShareIcon />
            共有
          </ActionButton>
        </TabActions>
      </TabsRow>

      <Ribbon>
        <Group $w={187} $pl={14} $gap={10}>
          <BigTool $w={60}>
            <BigIcon>
              <PasteIcon />
              <Chev c="#555" />
            </BigIcon>
            <BigLabel>ペースト</BigLabel>
          </BigTool>
          <CmdCol>
            <CmdRow>
              <Slot $w={29}><ScissorIcon /></Slot>
              <Label>切り取り</Label>
            </CmdRow>
            <CmdRow>
              <Slot $w={29}><CopyIcon /></Slot>
              <Label>コピー</Label>
              <Chev c="#555" />
            </CmdRow>
            <CmdRow>
              <Slot $w={29}><PainterIcon /></Slot>
              <Label>書式</Label>
            </CmdRow>
          </CmdCol>
        </Group>

        <Group $w={408} $pl={13}>
          <Stack>
            <ToolRow>
              <Combo $w={236}><Chev c="#666" /></Combo>
              <Combo $w={72}><Chev c="#666" /></Combo>
              <Slot $w={36}><Glyph $size={24}>A</Glyph><Tri d="u" c="#ccc" s={6} /></Slot>
              <Slot $w={36}><Glyph $size={19}>A</Glyph><Tri d="d" c="#ccc" s={6} /></Slot>
            </ToolRow>
            <ToolRow>
              <Slot $w={35}><Glyph $size={18} $bold>B</Glyph></Slot>
              <Slot $w={35}><Glyph $size={18} $italic>I</Glyph></Slot>
              <Slot $w={33}><Glyph $size={18} $line>U</Glyph></Slot>
              <Slot $w={14}><Chev /></Slot>
              <Slot $w={26}><VSep /></Slot>
              <Slot $w={27}><BorderIcon /></Slot>
              <Slot $w={22}><Chev /></Slot>
              <Slot $w={17}><VSep /></Slot>
              <Slot $w={36}><FillIcon /></Slot>
              <Slot $w={13}><Chev /></Slot>
              <Slot $w={39}><Glyph $size={22}>A</Glyph></Slot>
              <Slot $w={11}><Chev /></Slot>
              <Slot $w={28}><VSep /></Slot>
              <Slot $w={27}><AbcIcon /></Slot>
              <Slot $w={20}><Chev /></Slot>
            </ToolRow>
          </Stack>
        </Group>

        <Group $w={216} $pl={13}>
          <Stack>
            <ToolRow>
              <Slot $w={34}><Lines y={[4, 9, 14]} /></Slot>
              <Slot $w={34}><Lines y={[8, 13, 18]} /></Slot>
              <Slot $w={34}><Lines y={[13, 18, 23]} /></Slot>
              <Slot $w={24}><VSep /></Slot>
              <Slot $w={30}><OrientIcon /></Slot>
              <Slot $w={18}><Chev /></Slot>
            </ToolRow>
            <ToolRow>
              <Slot $w={34}><AlignH side="l" /></Slot>
              <Slot $w={34}><AlignH side="c" /></Slot>
              <Slot $w={34}><AlignH side="r" /></Slot>
              <Slot $w={24}><VSep /></Slot>
              <Slot $w={31}><OutdentIcon /></Slot>
              <Slot $w={38}><OutdentIcon flip /></Slot>
            </ToolRow>
          </Stack>
        </Group>

        <Group $w={235} $pl={17}>
          <Stack>
            <ToolRow>
              <Slot $w={30}><WrapIcon /></Slot>
              <Label $muted>折り返して全体を表示する</Label>
              <Chev />
            </ToolRow>
            <ToolRow>
              <Slot $w={30}><MergeIcon /></Slot>
              <Label $muted>セルを結合して中央揃え</Label>
              <Chev />
            </ToolRow>
          </Stack>
        </Group>

        <Group $w={235} $pl={14}>
          <Stack>
            <ToolRow>
              <Combo $w={205}><Chev c="#666" /></Combo>
            </ToolRow>
            <ToolRow>
              <Slot $w={30}><CurrencyIcon /></Slot>
              <Slot $w={19}><Chev c="#444" /></Slot>
              <Slot $w={34}><Glyph $size={24}>%</Glyph></Slot>
              <Slot $w={37}><CommaIcon /></Slot>
              <Slot $w={16}><VSep /></Slot>
              <Slot $w={36}><DecimalIcon inc /></Slot>
              <Slot $w={35}><DecimalIcon /></Slot>
            </ToolRow>
          </Stack>
        </Group>

        <Group $w={457} $pl={11} $gap={5}>
          <BigTool $w={65}>
            <BigIcon>
              <CondIcon />
              <Chev />
            </BigIcon>
            <BigLabel $muted>条件付き<br />書式</BigLabel>
          </BigTool>
          <BigTool $w={80}>
            <BigIcon>
              <TableIcon />
              <Chev />
            </BigIcon>
            <BigLabel $muted>テーブルと<br />して書式設定</BigLabel>
          </BigTool>
          <Gallery>
            <Caret />
            <Caret flip />
          </Gallery>
        </Group>

        <Group $w={225} $pl={14} $gap={2.5}>
          <BigTool $w={64}>
            <BigIcon>
              <InsertIcon />
              <Chev c="#444" />
            </BigIcon>
            <BigLabel>挿入</BigLabel>
          </BigTool>
          <BigTool $w={64}>
            <BigIcon>
              <DeleteIcon />
              <Chev c="#444" />
            </BigIcon>
            <BigLabel>削除</BigLabel>
          </BigTool>
          <BigTool $w={64}>
            <BigIcon>
              <FormatIcon />
              <Chev c="#444" />
            </BigIcon>
            <BigLabel>書式</BigLabel>
          </BigTool>
        </Group>

        <Group $w={296} $pl={19} $gap={2}>
          <CmdCol $w={126}>
            <CmdRow>
              <Slot $w={29}><SigmaIcon /></Slot>
              <Label>オート <SumText>SUM</SumText></Label>
              <Chev c="#444" />
            </CmdRow>
            <CmdRow>
              <Slot $w={29}><FillDownIcon /></Slot>
              <Label>フィル</Label>
              <Chev c="#444" />
            </CmdRow>
            <CmdRow>
              <Slot $w={29}><EraserIcon /></Slot>
              <Label $muted>クリア</Label>
              <Chev />
            </CmdRow>
          </CmdCol>
          <BigTool $w={65}>
            <BigIcon>
              <SortIcon />
              <Chev />
            </BigIcon>
            <BigLabel $muted>並べ替えと<br />フィルター</BigLabel>
          </BigTool>
          <BigTool $w={68}>
            <BigIcon>
              <FindIcon />
              <Chev c="#444" />
            </BigIcon>
            <BigLabel>検索と<br />選択</BigLabel>
          </BigTool>
        </Group>

        <Group $w={141} $pl={8} $last>
          <BigTool $w={66}>
            <BigIcon>
              <AnalysisIcon />
            </BigIcon>
            <BigLabel $muted>データ<br />の分析</BigLabel>
          </BigTool>
        </Group>
      </Ribbon>

      <FormulaBar>
        <NameBox>
          B118
          <Spinner>
            <Tri d="u" />
            <Tri d="d" />
          </Spinner>
        </NameBox>
        <Slot $w={54}><CrossIcon /></Slot>
        <Slot $w={26}><CheckIcon /></Slot>
        <Slot $w={47}><Fx>fx</Fx></Slot>
        <FormulaDivider />
        <FormulaText>かつては確かに、巧みに</FormulaText>
        <FormulaDrop><Tri d="d" c="#666" /></FormulaDrop>
      </FormulaBar>

      <HeaderRow>
        <Corner />
        <ColHead>A</ColHead>
        <ColHead $active>B</ColHead>
        <ColHead>C</ColHead>
        <ColHead>D</ColHead>
        <ColHead>E</ColHead>
        <ColHead>F</ColHead>
        <ColHead>G</ColHead>
        <ColHead>H</ColHead>
        <div />
      </HeaderRow>

      <SheetView>
        <Sheet>
          {rows.map((r) => {
            const no = r[0];
            const sizes = r[8];
            return (
              <Row key={no} $tall={sizes.includes('l')}>
                <RowHead $active={no === 118}>{no}</RowHead>
                <BlankCell $boxed={BOXED.includes(no)} />
                {[r[1], r[2], r[3], r[4], r[5]].map((text, i) => (
                  <Cell key={i} $size={sizes[i]} $bg={bgs[i]} $selected={no === 118 && i === 0}>
                    {text}
                  </Cell>
                ))}
                <LetterCell $size="s" $bg={YELLOW}>{r[6]}</LetterCell>
                <LetterCell $size="s" $bg={BLUE}>{r[7]}</LetterCell>
                <div />
              </Row>
            );
          })}
        </Sheet>
      </SheetView>

      <SheetTabs>
        <TabNav>
          <Tri d="l" c="#ccc" />
          <Tri d="r" c="#444" />
        </TabNav>
        {sheetTabs.map((t) => (
          <SheetTab key={t.name} $w={t.w} $active={t.active}>
            <LockIcon />
            {t.name}
          </SheetTab>
        ))}
        <SheetTab $w={125} $fade>
          <LockIcon />
          <FadeText>WRINKLE(言語)</FadeText>
        </SheetTab>
        <AddTab>+</AddTab>
      </SheetTabs>

      <StatusBar>
        <StatusLeft>
          準備完了
          <Slot $w={71}><MacroIcon /></Slot>
          <Slot $w={25}><A11yIcon /></Slot>
          アクセシビリティ: 検討が必要です
        </StatusLeft>
        <StatusRight>
          <ViewButton $w={50} $active><ViewIcon kind="grid" /></ViewButton>
          <ViewButton $w={47}><ViewIcon kind="page" /></ViewButton>
          <ViewButton $w={47}><ViewIcon kind="break" /></ViewButton>
          <Slot $w={34}><Glyph $size={20} $bold>-</Glyph></Slot>
          <ZoomTrack />
          <Slot $w={24}><Glyph $size={20} $bold>+</Glyph></Slot>
          <ZoomValue>90%</ZoomValue>
        </StatusRight>
      </StatusBar>
    </Page>
  );
}
